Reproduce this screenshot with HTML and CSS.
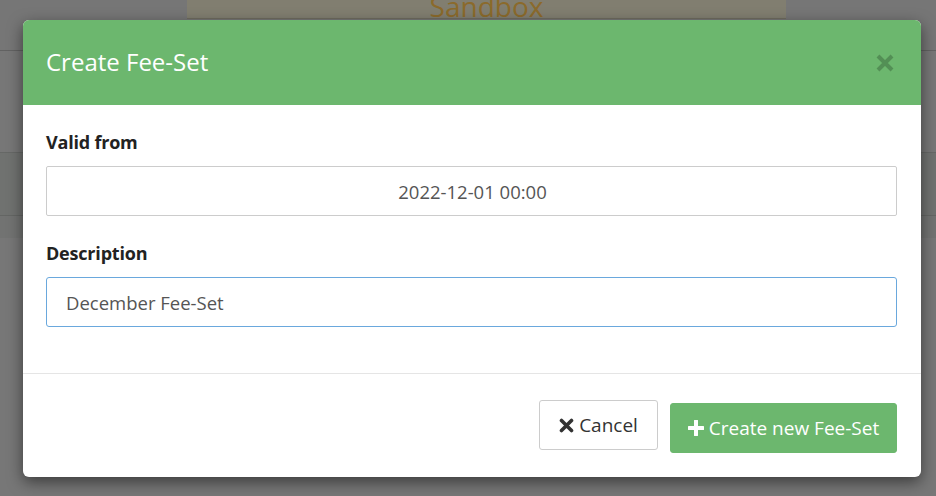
FILE: index.html
```html
<!DOCTYPE html>
<html>
<head>
<meta charset="utf-8">
<link rel="stylesheet" href="styles.css">
</head>
<body>
<div class="page">
  <div class="topbar">
    <div class="env-box"><span class="env-text">Sandbox</span></div>
  </div>
  <div class="content">
    <div class="row row-a"></div>
    <div class="row row-b"></div>
  </div>
</div>

<div class="modal" role="dialog">
  <div class="modal-header">
    <h4 class="modal-title">Create Fee-Set</h4>
    <button class="close" aria-label="Close">
      <svg width="18" height="18" viewBox="0 0 18 18"><path d="M2 2 L16 16 M16 2 L2 16" stroke="currentColor" stroke-width="4" stroke-linecap="butt"/></svg>
    </button>
  </div>
  <div class="modal-body">
    <div class="form-group">
      <label class="form-label">Valid from</label>
      <div class="form-control centered">2022-12-01 00:00</div>
    </div>
    <div class="form-group">
      <label class="form-label">Description</label>
      <div class="form-control focused">December Fee-Set</div>
    </div>
  </div>
  <div class="modal-footer">
    <button class="btn btn-default">
      <svg class="icon" width="15" height="15" viewBox="0 0 15 15"><path d="M2.5 2.5 L12.5 12.5 M12.5 2.5 L2.5 12.5" stroke="currentColor" stroke-width="3.6" stroke-linecap="round"/></svg>
      <span>Cancel</span>
    </button>
    <button class="btn btn-success">
      <svg class="icon" width="16" height="16" viewBox="0 0 16 16"><path d="M8 1 V15 M1 8 H15" stroke="currentColor" stroke-width="4" stroke-linecap="round"/></svg>
      <span>Create new Fee-Set</span>
    </button>
  </div>
</div>
</body>
</html>
```
FILE: styles.css
```css
html, body {
  margin: 0;
  padding: 0;
  width: 936px;
  height: 496px;
  overflow: hidden;
  font-family: "Open Sans", "Noto Sans", sans-serif;
}

.page {
  width: 936px;
  height: 496px;
  background: #777777;
  display: flex;
  flex-direction: column;
}

.topbar {
  height: 50px;
  background: #767676;
  border-bottom: 1px solid #626262;
  display: flex;
  justify-content: center;
  align-items: flex-start;
}

.env-box {
  margin-left: 37px;
  width: 599px;
  height: 18px;
  background: #817e70;
  border-bottom: 1px solid #6f6c60;
  display: flex;
  justify-content: center;
  align-items: flex-end;
  overflow: hidden;
}

.env-text {
  font-size: 28px;
  line-height: 1;
  color: #8b6a2b;
  margin-bottom: -2px;
}

.content {
  flex: 1;
  display: flex;
  flex-direction: column;
}

.row-a {
  margin-top: 101px;
  height: 62px;
  border-top: 1px solid #666866;
  border-bottom: 1px solid #646664;
  background: #707270;
}

.row-b {
  height: 22px;
  background: #727372;
}

.modal {
  position: absolute;
  left: 23px;
  top: 20px;
  width: 898px;
  height: 457px;
  background: #fff;
  border-radius: 6px;
  box-shadow: 0 5px 15px rgba(0, 0, 0, 0.5);
  overflow: hidden;
  display: flex;
  flex-direction: column;
  color: #333;
}

.modal-header {
  height: 85px;
  background: #6cb76e;
  display: flex;
  align-items: center;
  justify-content: space-between;
  padding: 0 27px 0 23px;
  box-sizing: border-box;
}

.modal-title {
  margin: 0;
  font-size: 24px;
  font-weight: 400;
  color: #fff;
  line-height: 1;
  padding-bottom: 2px;
}

.close {
  border: 0;
  background: none;
  padding: 0;
  margin: 0;
  color: #538f55;
  display: flex;
  cursor: pointer;
}

.modal-body {
  padding: 24px 24px 46px 23px;
  display: flex;
  flex-direction: column;
  gap: 24px;
  border-bottom: 1px solid #e5e5e5;
}

.form-group {
  display: flex;
  flex-direction: column;
  gap: 11px;
}

.form-label {
  font-size: 18px;
  font-weight: 700;
  line-height: 26px;
  color: #222;
  letter-spacing: -0.2px;
}

.form-control {
  height: 50px;
  box-sizing: border-box;
  border: 1px solid #cccccc;
  border-radius: 2px;
  padding: 0 19px;
  font-size: 18.5px;
  color: #555;
  display: flex;
  align-items: center;
}

.form-control.centered {
  justify-content: center;
  padding-left: 2px;
  padding-right: 0;
}

.form-control.focused {
  border-color: #6aa8dd;
  border-radius: 3px;
}

.modal-footer {
  flex: 1;
  display: flex;
  justify-content: flex-end;
  align-items: flex-start;
  gap: 12px;
  padding: 26px 24px 0 0;
}

.btn {
  height: 50px;
  box-sizing: border-box;
  border-radius: 3px;
  font-family: inherit;
  font-size: 19px;
  display: flex;
  align-items: center;
  justify-content: center;
  gap: 5px;
  padding: 0;
  cursor: pointer;
}

.btn-default {
  width: 119px;
  background: #fff;
  color: #333;
  border: 1px solid #cccccc;
}

.btn-success {
  width: 227px;
  margin-top: 3px;
  background: #6cb76e;
  color: #fff;
  border: 1px solid #6cb76e;
}

.btn .icon {
  flex: none;
}
```
